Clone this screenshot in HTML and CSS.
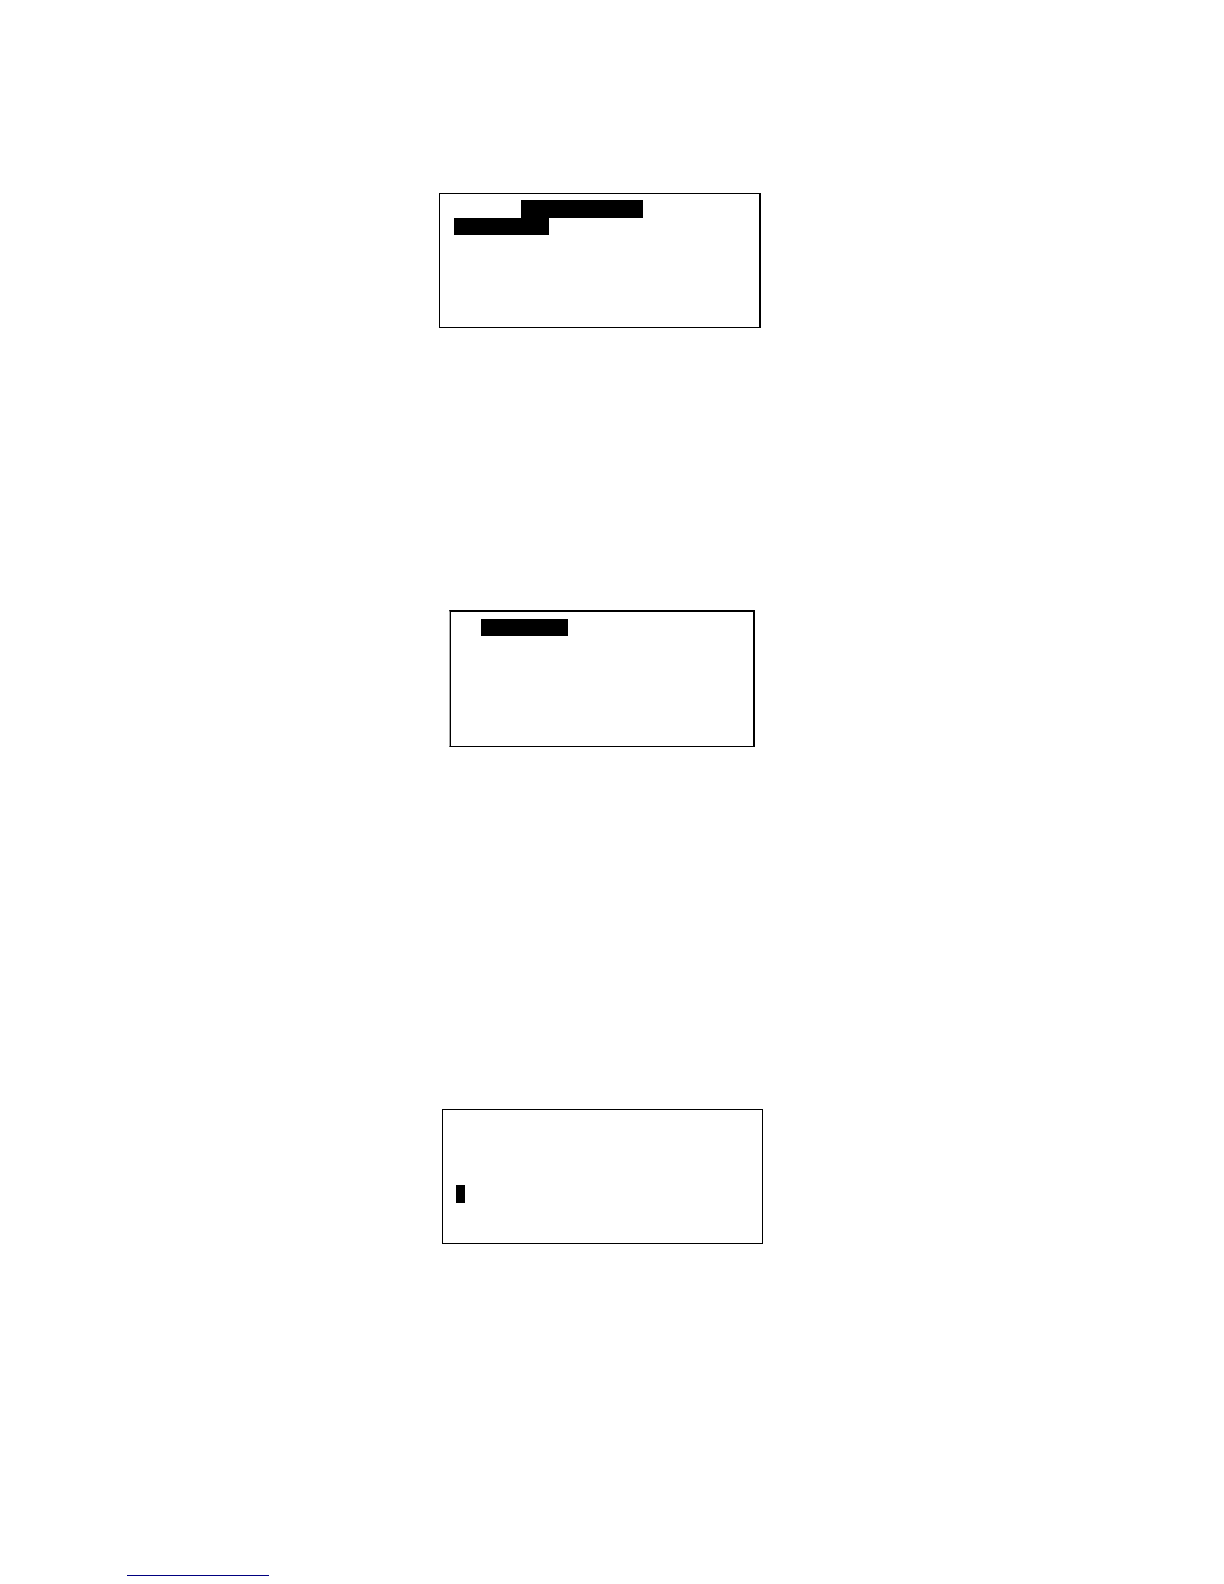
FILE: index.html
```html
<!DOCTYPE html>
<html lang="en">
<head>
<meta charset="utf-8">
<title>Display screens</title>
<link rel="stylesheet" href="styles.css">
</head>
<body>
<main class="page">
  <section class="screen screen-menu">
    <div class="bar bar-title"></div>
    <div class="bar bar-item"></div>
  </section>
  <section class="screen screen-list">
    <div class="bar bar-selected"></div>
  </section>
  <section class="screen screen-entry">
    <div class="bar bar-cursor"></div>
  </section>
  <hr class="rule">
</main>
</body>
</html>
```
FILE: styles.css
```css
body {
  margin: 0;
  background: #fff;
  font-family: "Liberation Sans", Arial, sans-serif;
}

.page {
  display: flex;
  flex-direction: column;
  align-items: center;
  padding: 193px 20px 8px 0;
}

.screen {
  box-sizing: border-box;
  max-width: 100%;
  border: 1px solid #000;
}

.bar {
  height: 17px;
  background: #000;
}

.screen-menu {
  width: 322px;
  min-height: 135px;
  margin-right: 4px;
  padding: 6px 14px;
  border-right-width: 2px;
}

.bar-title {
  width: 122px;
  height: 18px;
  margin-left: 67px;
}

.bar-item {
  width: 95px;
}

.screen-list {
  width: 306px;
  min-height: 137px;
  margin-top: 282px;
  padding: 7px 30px;
  border-width: 2px 2px 1px 1px;
  border-left-color: #aaa;
  box-shadow: inset 1px 0 #000;
}

.bar-selected {
  width: 87px;
  margin-left: 1px;
}

.screen-entry {
  width: 321px;
  min-height: 135px;
  margin-top: 362px;
  margin-left: 1px;
  padding: 75px 13px;
}

.screen-entry {
  padding-bottom: 16px;
}

.bar-cursor {
  width: 9px;
  height: 18px;
}

.rule {
  align-self: flex-start;
  width: 142px;
  height: 1px;
  margin: 331px 0 0 127px;
  border: 0;
  background: #000080;
}
```
